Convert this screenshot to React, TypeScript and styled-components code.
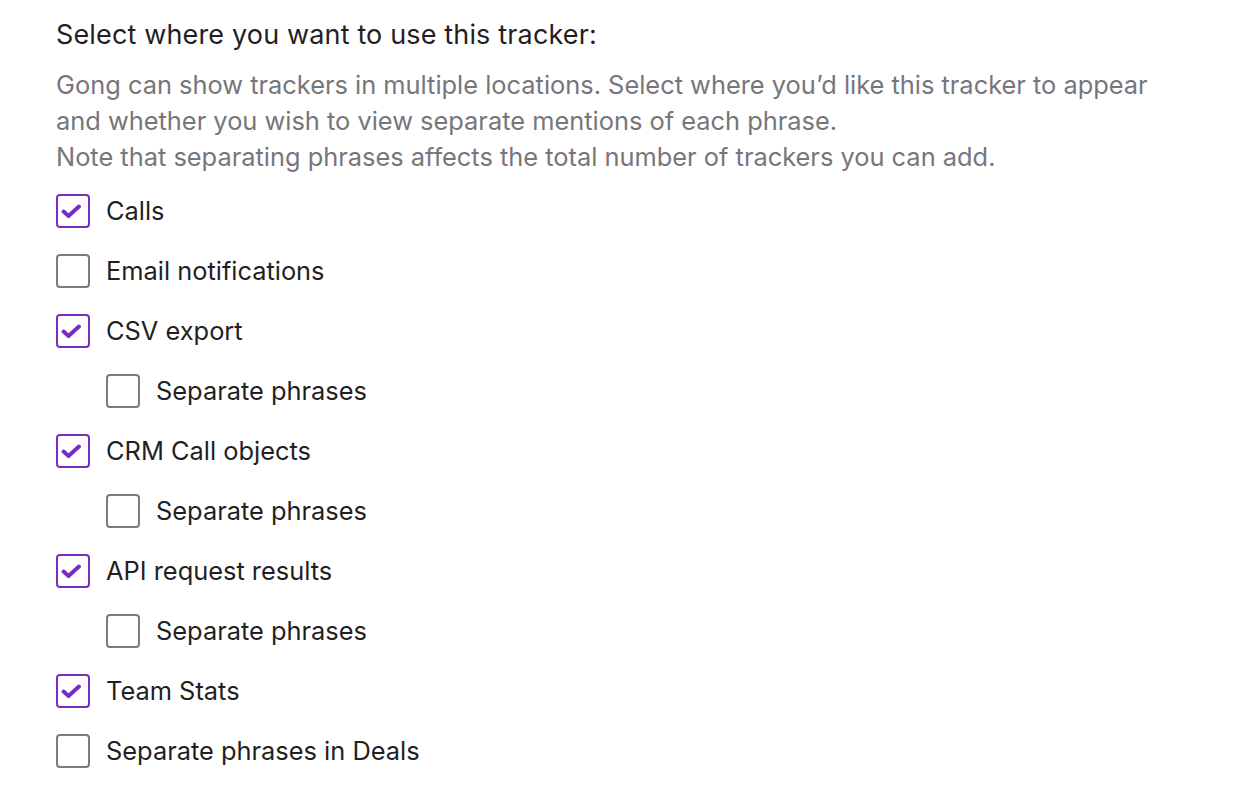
import React, { useState } from "react";
import styled, { createGlobalStyle } from "styled-components";

const GlobalStyle = createGlobalStyle`
  html, body { margin: 0; padding: 0; background: #ffffff; }
  body { font-family: Inter, "Noto Sans", "Liberation Sans", sans-serif; -webkit-font-smoothing: antialiased; }
`;

const Page = styled.div`
  padding: 17px 56px 0 56px;
  display: flex;
  flex-direction: column;
`;

const Heading = styled.h2`
  margin: 0;
  font-size: 27px;
  line-height: 36px;
  letter-spacing: 0.15px;
  font-weight: 400;
  color: #1f1f24;
`;

const Description = styled.p`
  margin: 14px 0 0 0;
  font-size: 25.4px;
  line-height: 36px;
  font-weight: 400;
  color: #76767b;
`;

const List = styled.div`
  display: flex;
  flex-direction: column;
  margin-top: 6px;
`;

const Row = styled.label<{ $indent?: boolean }>`
  display: flex;
  align-items: center;
  gap: 16px;
  height: 60px;
  padding-left: ${(p) => (p.$indent ? "50px" : "0")};
  cursor: pointer;
`;

const Box = styled.span<{ $checked: boolean }>`
  box-sizing: border-box;
  width: 34px;
  height: 34px;
  border-radius: 4px;
  border: 2px solid ${(p) => (p.$checked ? "#7b2cc0" : "#7a7a7f")};
  display: flex;
  align-items: center;
  justify-content: center;
  flex-shrink: 0;
  background: #fff;
`;

const Label = styled.span`
  font-size: 25.4px;
  line-height: 36px;
  color: #1f1f24;
`;

const Check = () => (
  <svg width="30" height="30" viewBox="0 0 30 30">
    <path d="M5.5 15.5 L10.5 20 L21 10.5" fill="none" stroke="#7b2cc0" strokeWidth="4" strokeLinecap="round" strokeLinejoin="round" />
  </svg>
);

type Item = { label: string; checked: boolean; indent?: boolean };

const initial: Item[] = [
  { label: "Calls", checked: true },
  { label: "Email notifications", checked: false },
  { label: "CSV export", checked: true },
  { label: "Separate phrases", checked: false, indent: true },
  { label: "CRM Call objects", checked: true },
  { label: "Separate phrases", checked: false, indent: true },
  { label: "API request results", checked: true },
  { label: "Separate phrases", checked: false, indent: true },
  { label: "Team Stats", checked: true },
  { label: "Separate phrases in Deals", checked: false },
];

export default function App() {
  const [items, setItems] = useState(initial);
  const toggle = (i: number) =>
    setItems((prev) => prev.map((it, j) => (j === i ? { ...it, checked: !it.checked } : it)));
  return (
    <>
      <GlobalStyle />
      <Page>
        <Heading>Select where you want to use this tracker:</Heading>
        <Description>
          Gong can show trackers in multiple locations. Select where you’d like this tracker to appear
          <br />
          and whether you wish to view separate mentions of each phrase.
          <br />
          Note that separating phrases affects the total number of trackers you can add.
        </Description>
        <List>
          {items.map((it, i) => (
            <Row key={i} $indent={it.indent} onClick={() => toggle(i)}>
              <Box $checked={it.checked}>{it.checked && <Check />}</Box>
              <Label>{it.label}</Label>
            </Row>
          ))}
        </List>
      </Page>
    </>
  );
}
